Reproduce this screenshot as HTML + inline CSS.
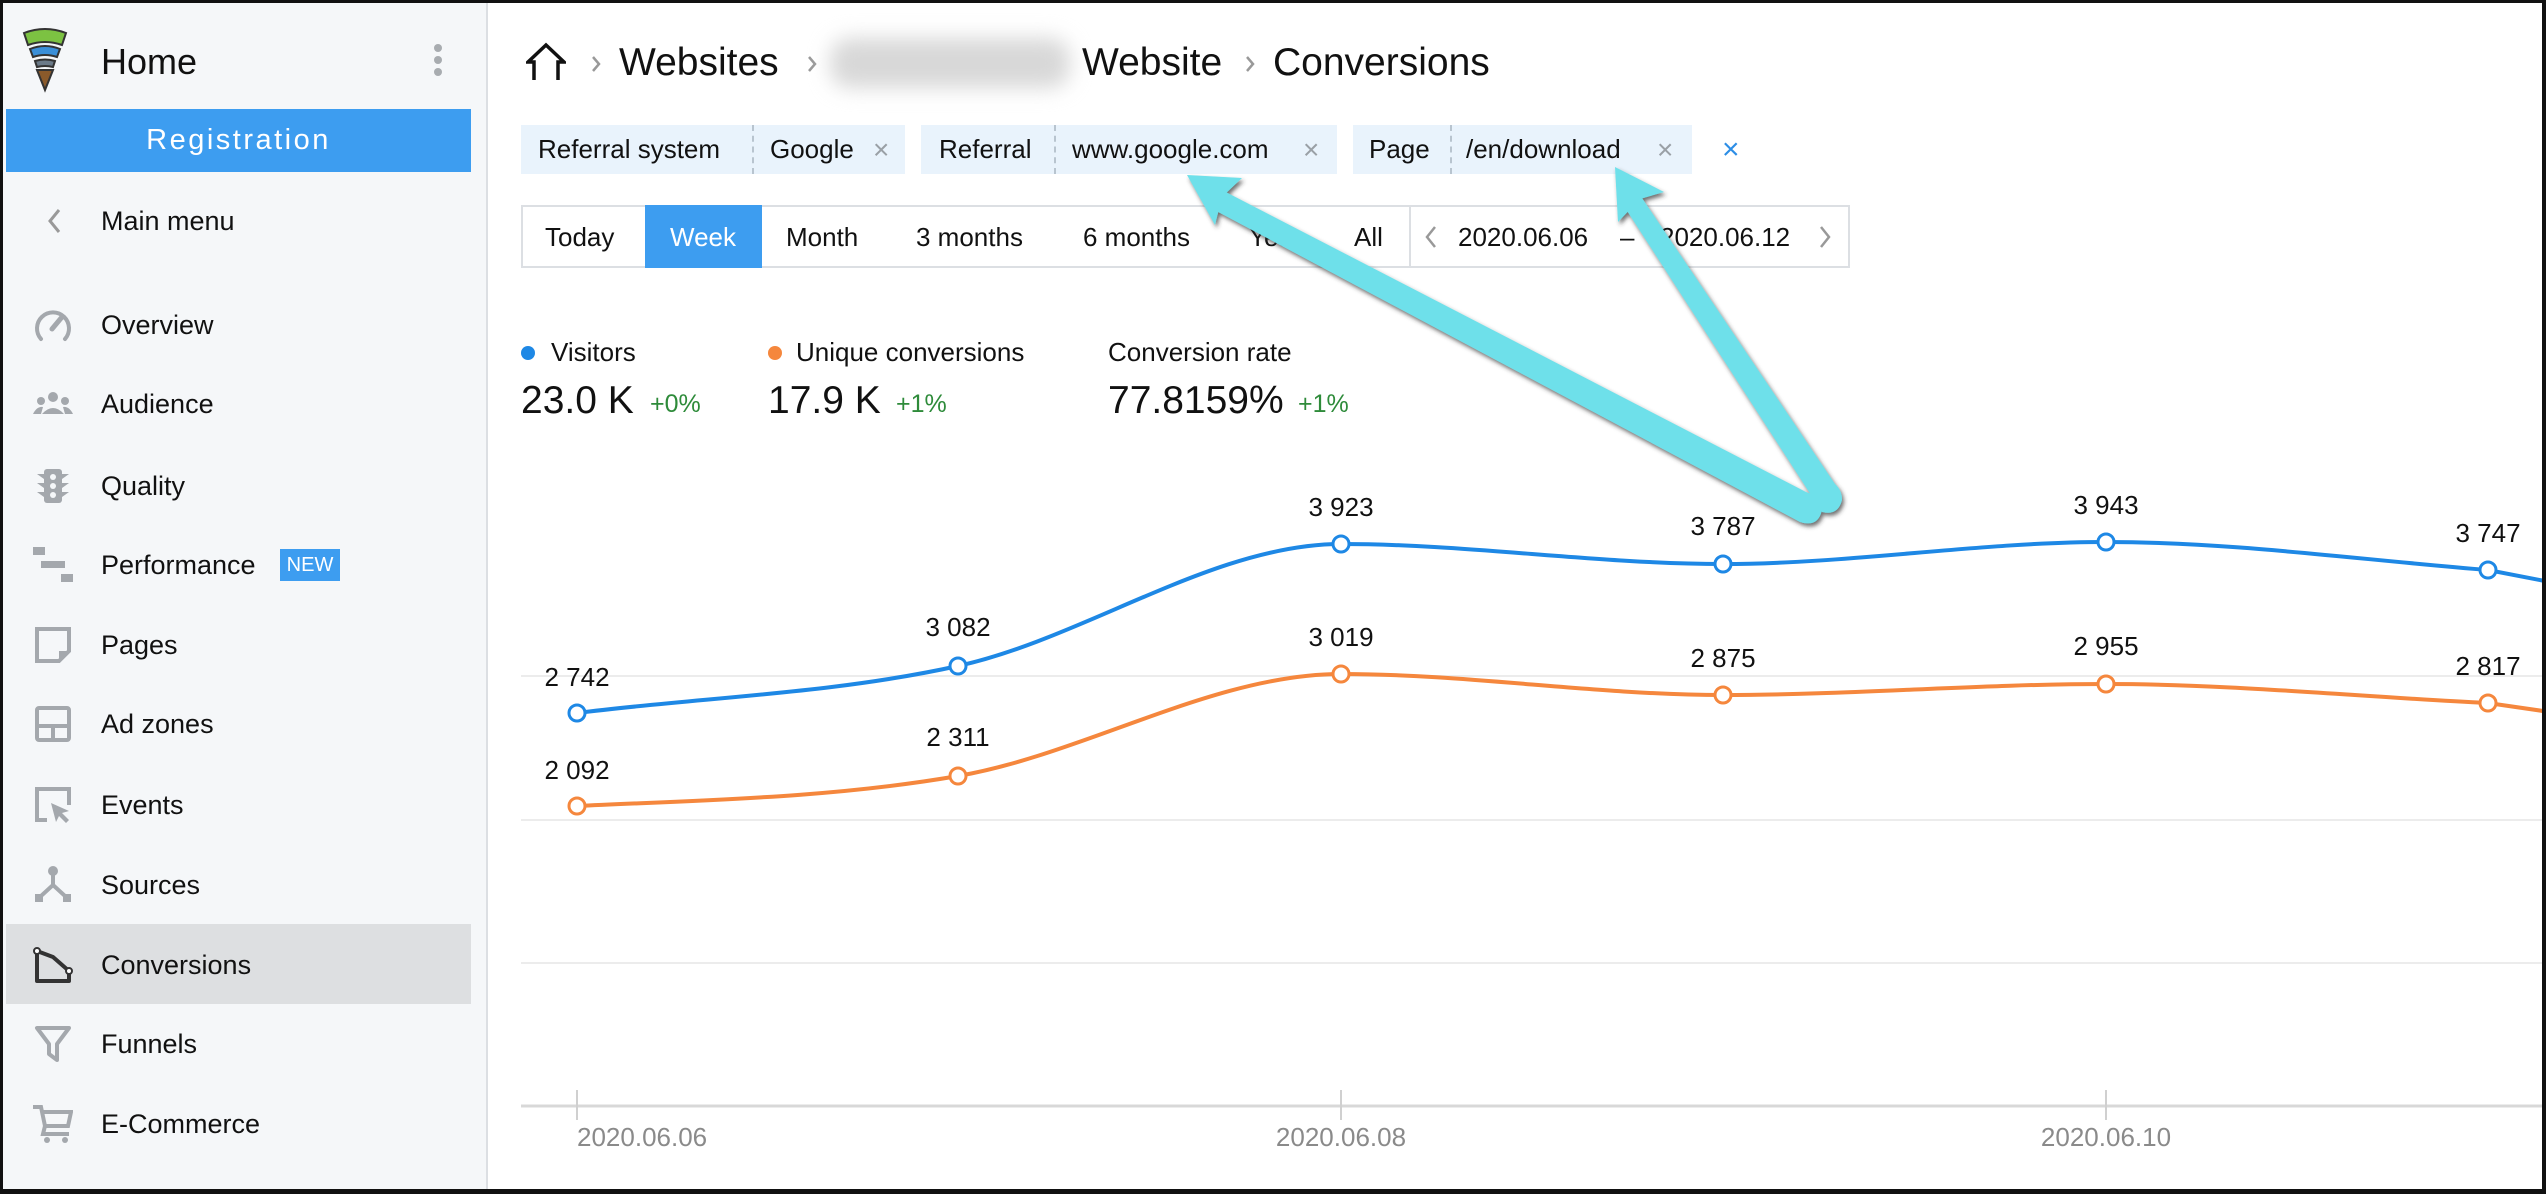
<!DOCTYPE html>
<html><head><meta charset="utf-8"><style>
*{margin:0;padding:0;box-sizing:border-box}
body{width:2546px;height:1194px;overflow:hidden;background:#fff;font-family:"Liberation Sans",Arial,sans-serif;position:relative;color:#111}
.a{position:absolute;white-space:nowrap}
#frame{position:absolute;left:0;top:0;width:2546px;height:1194px;border:3px solid #111;border-right-width:4px;border-bottom-width:5px;pointer-events:none;z-index:50}
#side{position:absolute;left:0;top:0;width:488px;height:1194px;background:#f5f7f9;border-right:2px solid #dcdfe3}
.mi{position:absolute;left:101px;font-size:27px;line-height:40px;height:40px;color:#111;white-space:nowrap}
.ic{position:absolute;left:33px;width:40px;height:40px}
.chip{position:absolute;top:125px;height:49px;background:#e9f3fc}
.chip span{position:absolute;top:0;line-height:49px;font-size:26px;color:#111;white-space:nowrap}
.chip .x{color:#9aa0a6;font-size:28px}
.dv{position:absolute;top:0;width:0;height:49px;border-left:2px dashed #b8c4cf}
.pb{position:absolute;top:207px;line-height:60px;font-size:26px;color:#111;white-space:nowrap}
.lbl{position:absolute;font-size:26px;color:#111;transform:translateX(-50%);line-height:30px;white-space:nowrap}
</style></head><body>
<div id="side">
  <svg class="a" style="left:22px;top:27px" width="46" height="66" viewBox="0 0 46 66">
    <path d="M2 6 Q23 -2 44 6 L40 18 Q23 12 6 18 Z" fill="#7cc242" stroke="#333" stroke-width="2"/>
    <path d="M8 22 Q23 16 38 22 L35 30 Q23 26 11 30 Z" fill="#3a8fd8" stroke="#333" stroke-width="2"/>
    <path d="M13 34 Q23 31 33 34 L31 40 Q23 38 15 40 Z" fill="#6b7a88" stroke="#333" stroke-width="2"/>
    <path d="M15 43 L31 43 L23 63 Z" fill="#8a5a2b" stroke="#333" stroke-width="2"/>
  </svg>
  <div class="a" style="left:101px;top:42px;font-size:36px;line-height:40px">Home</div>
  <div class="a" style="left:434px;top:44px;width:8px;height:8px;border-radius:4px;background:#a8acb0"></div>
  <div class="a" style="left:434px;top:56px;width:8px;height:8px;border-radius:4px;background:#a8acb0"></div>
  <div class="a" style="left:434px;top:68px;width:8px;height:8px;border-radius:4px;background:#a8acb0"></div>
  <div class="a" style="left:6px;top:109px;width:465px;height:63px;background:#3d9df0;color:#fff;font-size:29px;line-height:63px;text-align:center;letter-spacing:2.5px">Registration</div>
  <svg class="a" style="left:44px;top:206px" width="20" height="30"><path d="M15 4 L6 15 L15 26" fill="none" stroke="#999" stroke-width="3"/></svg>
  <div class="mi" style="top:201px">Main menu</div>

  <svg class="ic" style="top:305px" viewBox="0 0 40 40"><path d="M8 34 A16 16 0 1 1 32 34" fill="none" stroke="#a4a8ad" stroke-width="4" stroke-linecap="round"/><path d="M19 24 L29 12" stroke="#a4a8ad" stroke-width="5" stroke-linecap="round"/></svg>
  <div class="mi" style="top:305px">Overview</div>
  <svg class="ic" style="top:384px" viewBox="0 0 40 40"><circle cx="20" cy="13" r="5" fill="#a4a8ad"/><circle cx="8" cy="17" r="4" fill="#a4a8ad"/><circle cx="32" cy="17" r="4" fill="#a4a8ad"/><path d="M9 30 Q20 18 31 30 Z M0 30 Q4 22 10 23 L8 30Z M40 30 Q36 22 30 23 L32 30Z" fill="#a4a8ad"/></svg>
  <div class="mi" style="top:384px">Audience</div>
  <svg class="ic" style="top:466px" viewBox="0 0 40 40"><rect x="11" y="3" width="18" height="34" rx="3" fill="#a4a8ad"/><path d="M4 8h7v5zM4 17h7v5zM4 26h7v5zM36 8h-7v5zM36 17h-7v5zM36 26h-7v5z" fill="#a4a8ad"/><circle cx="20" cy="11" r="3" fill="#f5f7f9"/><circle cx="20" cy="20" r="3" fill="#f5f7f9"/><circle cx="20" cy="29" r="3" fill="#f5f7f9"/></svg>
  <div class="mi" style="top:466px">Quality</div>
  <svg class="ic" style="top:545px" viewBox="0 0 40 40"><rect x="0" y="2" width="12" height="8" fill="#a4a8ad"/><rect x="8" y="16" width="24" height="7" fill="#a4a8ad"/><rect x="28" y="29" width="12" height="8" fill="#a4a8ad"/></svg>
  <div class="mi" style="top:545px">Performance</div>
  <div class="a" style="left:280px;top:549px;width:60px;height:32px;background:#3d9df0;color:#fff;font-size:20px;line-height:32px;text-align:center">NEW</div>

  <svg class="ic" style="top:625px" viewBox="0 0 40 40"><path d="M4 4 H36 V26 L26 36 H4 Z" fill="none" stroke="#a4a8ad" stroke-width="4"/><path d="M26 36 V26 H36 Z" fill="#a4a8ad"/></svg>
  <div class="mi" style="top:625px">Pages</div>
  <svg class="ic" style="top:704px" viewBox="0 0 40 40"><rect x="4" y="4" width="32" height="32" rx="2" fill="none" stroke="#a4a8ad" stroke-width="4"/><path d="M4 22H36M20 22V36" stroke="#a4a8ad" stroke-width="4"/></svg>
  <div class="mi" style="top:704px">Ad zones</div>
  <svg class="ic" style="top:785px" viewBox="0 0 40 40"><path d="M14 35H4V4H36V20" fill="none" stroke="#a4a8ad" stroke-width="4"/><path d="M18 18 L36 26 L29 28 L36 35 L33 38 L26 31 L23 37 Z" fill="#a4a8ad"/></svg>
  <div class="mi" style="top:785px">Events</div>
  <svg class="ic" style="top:865px" viewBox="0 0 40 40"><circle cx="20" cy="6" r="5" fill="#a4a8ad"/><path d="M20 8V20L8 31M20 20L32 31" fill="none" stroke="#a4a8ad" stroke-width="4"/><rect x="2" y="29" width="8" height="8" fill="#a4a8ad"/><rect x="30" y="29" width="8" height="8" fill="#a4a8ad"/></svg>
  <div class="mi" style="top:865px">Sources</div>
  <div class="a" style="left:6px;top:924px;width:465px;height:80px;background:#dddfe1"></div>
  <svg class="ic" style="top:945px" viewBox="0 0 40 40"><path d="M4 6V36H36V26L20 12L4 6" fill="none" stroke="#333" stroke-width="4" stroke-linejoin="round"/><circle cx="4" cy="6" r="3" fill="#fff" stroke="#333" stroke-width="2"/><circle cx="36" cy="26" r="3" fill="#fff" stroke="#333" stroke-width="2"/></svg>
  <div class="mi" style="top:945px">Conversions</div>
  <svg class="ic" style="top:1024px" viewBox="0 0 40 40"><path d="M4 4H36L24 20V36L16 30V20Z" fill="none" stroke="#a4a8ad" stroke-width="4" stroke-linejoin="round"/></svg>
  <div class="mi" style="top:1024px">Funnels</div>
  <svg class="ic" style="top:1104px" viewBox="0 0 40 40"><path d="M0 3H8L12 22H35L38 8H10" fill="none" stroke="#a4a8ad" stroke-width="4"/><path d="M12 22L10 30H36" fill="none" stroke="#a4a8ad" stroke-width="4"/><circle cx="14" cy="36" r="3" fill="#a4a8ad"/><circle cx="32" cy="36" r="3" fill="#a4a8ad"/></svg>
  <div class="mi" style="top:1104px">E-Commerce</div>
</div>

<!-- breadcrumb -->
<svg class="a" style="left:526px;top:42px" width="40" height="40" viewBox="0 0 40 40"><path d="M8 38V20H2L20 3L38 20H32V38" fill="none" stroke="#111" stroke-width="3.5"/></svg>
<svg class="a" style="left:590px;top:54px" width="12" height="20"><path d="M3 3L9 10L3 17" fill="none" stroke="#999" stroke-width="2.5"/></svg>
<div class="a" style="left:619px;top:40px;font-size:39px;line-height:46px">Websites</div>
<svg class="a" style="left:806px;top:54px" width="12" height="20"><path d="M3 3L9 10L3 17" fill="none" stroke="#999" stroke-width="2.5"/></svg>
<div class="a" style="left:830px;top:38px;width:240px;height:50px;background:#d8d8d8;filter:blur(10px);border-radius:20px"></div>
<div class="a" style="left:1082px;top:40px;font-size:39px;line-height:46px">Website</div>
<svg class="a" style="left:1244px;top:54px" width="12" height="20"><path d="M3 3L9 10L3 17" fill="none" stroke="#999" stroke-width="2.5"/></svg>
<div class="a" style="left:1273px;top:40px;font-size:39px;line-height:46px">Conversions</div>

<!-- chips -->
<div class="chip" style="left:521px;width:384px"><span style="left:17px">Referral system</span><div class="dv" style="left:231px"></div><span style="left:249px">Google</span><span class="x" style="left:352px">×</span></div>
<div class="chip" style="left:921px;width:416px"><span style="left:18px">Referral</span><div class="dv" style="left:133px"></div><span style="left:151px">www.google.com</span><span class="x" style="left:382px">×</span></div>
<div class="chip" style="left:1353px;width:339px"><span style="left:16px">Page</span><div class="dv" style="left:97px"></div><span style="left:113px">/en/download</span><span class="x" style="left:304px">×</span></div>
<div class="a" style="left:1722px;top:125px;line-height:49px;font-size:30px;color:#2d8ee6">×</div>

<!-- period bar -->
<div class="a" style="left:521px;top:205px;width:1329px;height:63px;border:2px solid #dcdfe3"></div>
<div class="a" style="left:645px;top:205px;width:117px;height:63px;background:#3d9df0"></div>
<div class="a" style="left:1409px;top:205px;width:2px;height:63px;background:#dcdfe3"></div>
<div class="pb" style="left:545px">Today</div>
<div class="pb" style="left:670px;color:#fff">Week</div>
<div class="pb" style="left:786px">Month</div>
<div class="pb" style="left:916px">3 months</div>
<div class="pb" style="left:1083px">6 months</div>
<div class="pb" style="left:1249px">Year</div>
<div class="pb" style="left:1354px">All</div>
<svg class="a" style="left:1424px;top:224px" width="14" height="26"><path d="M11 3L3 13L11 23" fill="none" stroke="#999" stroke-width="2.5"/></svg>
<div class="pb" style="left:1458px">2020.06.06</div>
<div class="pb" style="left:1620px">–</div>
<div class="pb" style="left:1660px">2020.06.12</div>
<svg class="a" style="left:1818px;top:224px" width="14" height="26"><path d="M3 3L11 13L3 23" fill="none" stroke="#999" stroke-width="2.5"/></svg>

<!-- metrics -->
<div class="a" style="left:521px;top:346px;width:14px;height:14px;border-radius:7px;background:#1e88e5"></div>
<div class="a" style="left:551px;top:336px;font-size:26px;line-height:32px">Visitors</div>
<div class="a" style="left:768px;top:346px;width:14px;height:14px;border-radius:7px;background:#f5873d"></div>
<div class="a" style="left:796px;top:336px;font-size:26px;line-height:32px">Unique conversions</div>
<div class="a" style="left:1108px;top:336px;font-size:26px;line-height:32px">Conversion rate</div>
<div class="a" style="left:521px;top:378px;font-size:39px;line-height:46px">23.0 K</div>
<div class="a" style="left:650px;top:388px;font-size:25px;line-height:32px;color:#2e8b3a">+0%</div>
<div class="a" style="left:768px;top:378px;font-size:39px;line-height:46px">17.9 K</div>
<div class="a" style="left:896px;top:388px;font-size:25px;line-height:32px;color:#2e8b3a">+1%</div>
<div class="a" style="left:1108px;top:378px;font-size:39px;line-height:46px">77.8159%</div>
<div class="a" style="left:1298px;top:388px;font-size:25px;line-height:32px;color:#2e8b3a">+1%</div>

<!-- chart -->
<svg class="a" style="left:0;top:0" width="2546" height="1194">
  <g stroke="#ececec" stroke-width="2"><line x1="521" y1="676" x2="2546" y2="676"/><line x1="521" y1="820" x2="2546" y2="820"/><line x1="521" y1="963" x2="2546" y2="963"/></g>
  <line x1="521" y1="1106" x2="2546" y2="1106" stroke="#d8d8d8" stroke-width="3"/>
  <g stroke="#d0d0d0" stroke-width="2"><line x1="577" y1="1090" x2="577" y2="1120"/><line x1="1341" y1="1090" x2="1341" y2="1120"/><line x1="2106" y1="1090" x2="2106" y2="1120"/></g>
  <path d="M577 713 C704 697 831 694 958 666 C1085 638 1214 544 1341 544 C1468 544 1596 564 1723 564 C1850 564 1979 542 2106 542 C2233 542 2361 560 2488 570 L2550 582" fill="none" stroke="#1e88e5" stroke-width="4"/>
  <path d="M577 806 C704 800 831 798 958 776 C1085 754 1214 674 1341 674 C1468 674 1596 695 1723 695 C1850 695 1979 684 2106 684 C2233 684 2361 697 2488 703 L2550 712" fill="none" stroke="#f5873d" stroke-width="4"/>
  <g fill="#fff" stroke="#1e88e5" stroke-width="3"><circle cx="577" cy="713" r="8"/><circle cx="958" cy="666" r="8"/><circle cx="1341" cy="544" r="8"/><circle cx="1723" cy="564" r="8"/><circle cx="2106" cy="542" r="8"/><circle cx="2488" cy="570" r="8"/></g>
  <g fill="#fff" stroke="#f5873d" stroke-width="3"><circle cx="577" cy="806" r="8"/><circle cx="958" cy="776" r="8"/><circle cx="1341" cy="674" r="8"/><circle cx="1723" cy="695" r="8"/><circle cx="2106" cy="684" r="8"/><circle cx="2488" cy="703" r="8"/></g>
</svg>
<div class="lbl" style="left:577px;top:662px">2 742</div>
<div class="lbl" style="left:958px;top:612px">3 082</div>
<div class="lbl" style="left:1341px;top:492px">3 923</div>
<div class="lbl" style="left:1723px;top:511px">3 787</div>
<div class="lbl" style="left:2106px;top:490px">3 943</div>
<div class="lbl" style="left:2488px;top:518px">3 747</div>
<div class="lbl" style="left:577px;top:755px">2 092</div>
<div class="lbl" style="left:958px;top:722px">2 311</div>
<div class="lbl" style="left:1341px;top:622px">3 019</div>
<div class="lbl" style="left:1723px;top:643px">2 875</div>
<div class="lbl" style="left:2106px;top:631px">2 955</div>
<div class="lbl" style="left:2488px;top:651px">2 817</div>
<div class="a" style="left:577px;top:1122px;font-size:26px;line-height:30px;color:#8a8a8a">2020.06.06</div>
<div class="lbl" style="left:1341px;top:1122px;color:#8a8a8a">2020.06.08</div>
<div class="lbl" style="left:2106px;top:1122px;color:#8a8a8a">2020.06.10</div>

<!-- arrows -->
<svg class="a" style="left:0;top:0;z-index:40" width="2546" height="1194">
  <defs><filter id="sh" x="-10%" y="-10%" width="120%" height="120%"><feDropShadow dx="2" dy="3" stdDeviation="2" flood-color="#333" flood-opacity="0.7"/></filter></defs>
  <g filter="url(#sh)" fill="#6ee0ea">
    <path d="M1205 205 L1800 522 Q1818 528 1822 510 Q1820 496 1806 492 L1218 188 Z"/>
    <path d="M1187 175 L1242 178 L1222 197 L1215 225 Z"/>
    <path d="M1620 200 L1822 512 Q1838 516 1842 500 Q1842 490 1835 484 L1640 195 Z"/>
    <path d="M1615 167 L1664 192 L1640 199 L1618 222 Z"/>
  </g>
</svg>
<div id="frame"></div>
</body></html>
